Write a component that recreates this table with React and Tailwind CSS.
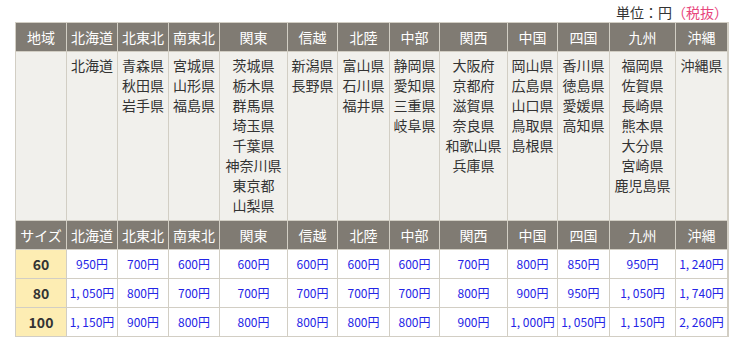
import React from "react";

const regions = ["北海道", "北東北", "南東北", "関東", "信越", "北陸", "中部", "関西", "中国", "四国", "九州", "沖縄"];
const prefs = [
  ["北海道"],
  ["青森県", "秋田県", "岩手県"],
  ["宮城県", "山形県", "福島県"],
  ["茨城県", "栃木県", "群馬県", "埼玉県", "千葉県", "神奈川県", "東京都", "山梨県"],
  ["新潟県", "長野県"],
  ["富山県", "石川県", "福井県"],
  ["静岡県", "愛知県", "三重県", "岐阜県"],
  ["大阪府", "京都府", "滋賀県", "奈良県", "和歌山県", "兵庫県"],
  ["岡山県", "広島県", "山口県", "鳥取県", "島根県"],
  ["香川県", "徳島県", "愛媛県", "高知県"],
  ["福岡県", "佐賀県", "長崎県", "熊本県", "大分県", "宮崎県", "鹿児島県"],
  ["沖縄県"],
];
const prices = [
  ["60", ["950円", "700円", "600円", "600円", "600円", "600円", "600円", "700円", "800円", "850円", "950円", "1, 240円"]],
  ["80", ["1, 050円", "800円", "700円", "700円", "700円", "700円", "700円", "800円", "900円", "950円", "1, 050円", "1, 740円"]],
  ["100", ["1, 150円", "900円", "800円", "800円", "800円", "800円", "800円", "900円", "1, 000円", "1, 050円", "1, 150円", "2, 260円"]],
];

const head = "bg-[#807b73] text-white text-[14px] flex items-center justify-center h-[28px]";

export default function App() {
  return (
    <div className="w-[737px] h-[348px] bg-white" style={{ fontFamily: '"Noto Sans CJK JP", "Noto Sans", sans-serif' }}>
      <div className="pt-[1px] pr-[9px] h-[22px] flex items-center justify-end text-[14px] leading-[20px] text-[#333]">
        単位：円<span className="text-[#e8457c]">（税抜）</span>
      </div>
      <div className="ml-[15px] w-[714px] grid grid-cols-[50px_50px_50px_50px_67px_49px_51px_49px_67px_49px_51px_65px_51px] gap-px p-px bg-[#d2cec4]">
        <div className={head}>地域</div>
        {regions.map((r) => (
          <div key={r} className={head}>{r}</div>
        ))}
        <div className="bg-[#f1f0ec] h-[168px]" />
        {prefs.map((p, i) => (
          <div key={i} className="bg-[#f1f0ec] h-[168px] pt-[3px] flex flex-col items-center text-[14px] leading-[20px] text-[#333]">
            {p.map((x) => (
              <div key={x}>{x}</div>
            ))}
          </div>
        ))}
        <div className={head}>サイズ</div>
        {regions.map((r) => (
          <div key={r + "2"} className={head}>{r}</div>
        ))}
        {prices.map(([size, row]) => (
          <React.Fragment key={size}>
            <div className="bg-[#fdedb3] h-[28px] flex items-center justify-center text-[14px] font-bold text-[#333]">{size}</div>
            {row.map((v, i) => (
              <div key={i} className="bg-white h-[28px] flex items-center justify-center text-[12px] text-[#2424e6]">{v}</div>
            ))}
          </React.Fragment>
        ))}
      </div>
    </div>
  );
}
